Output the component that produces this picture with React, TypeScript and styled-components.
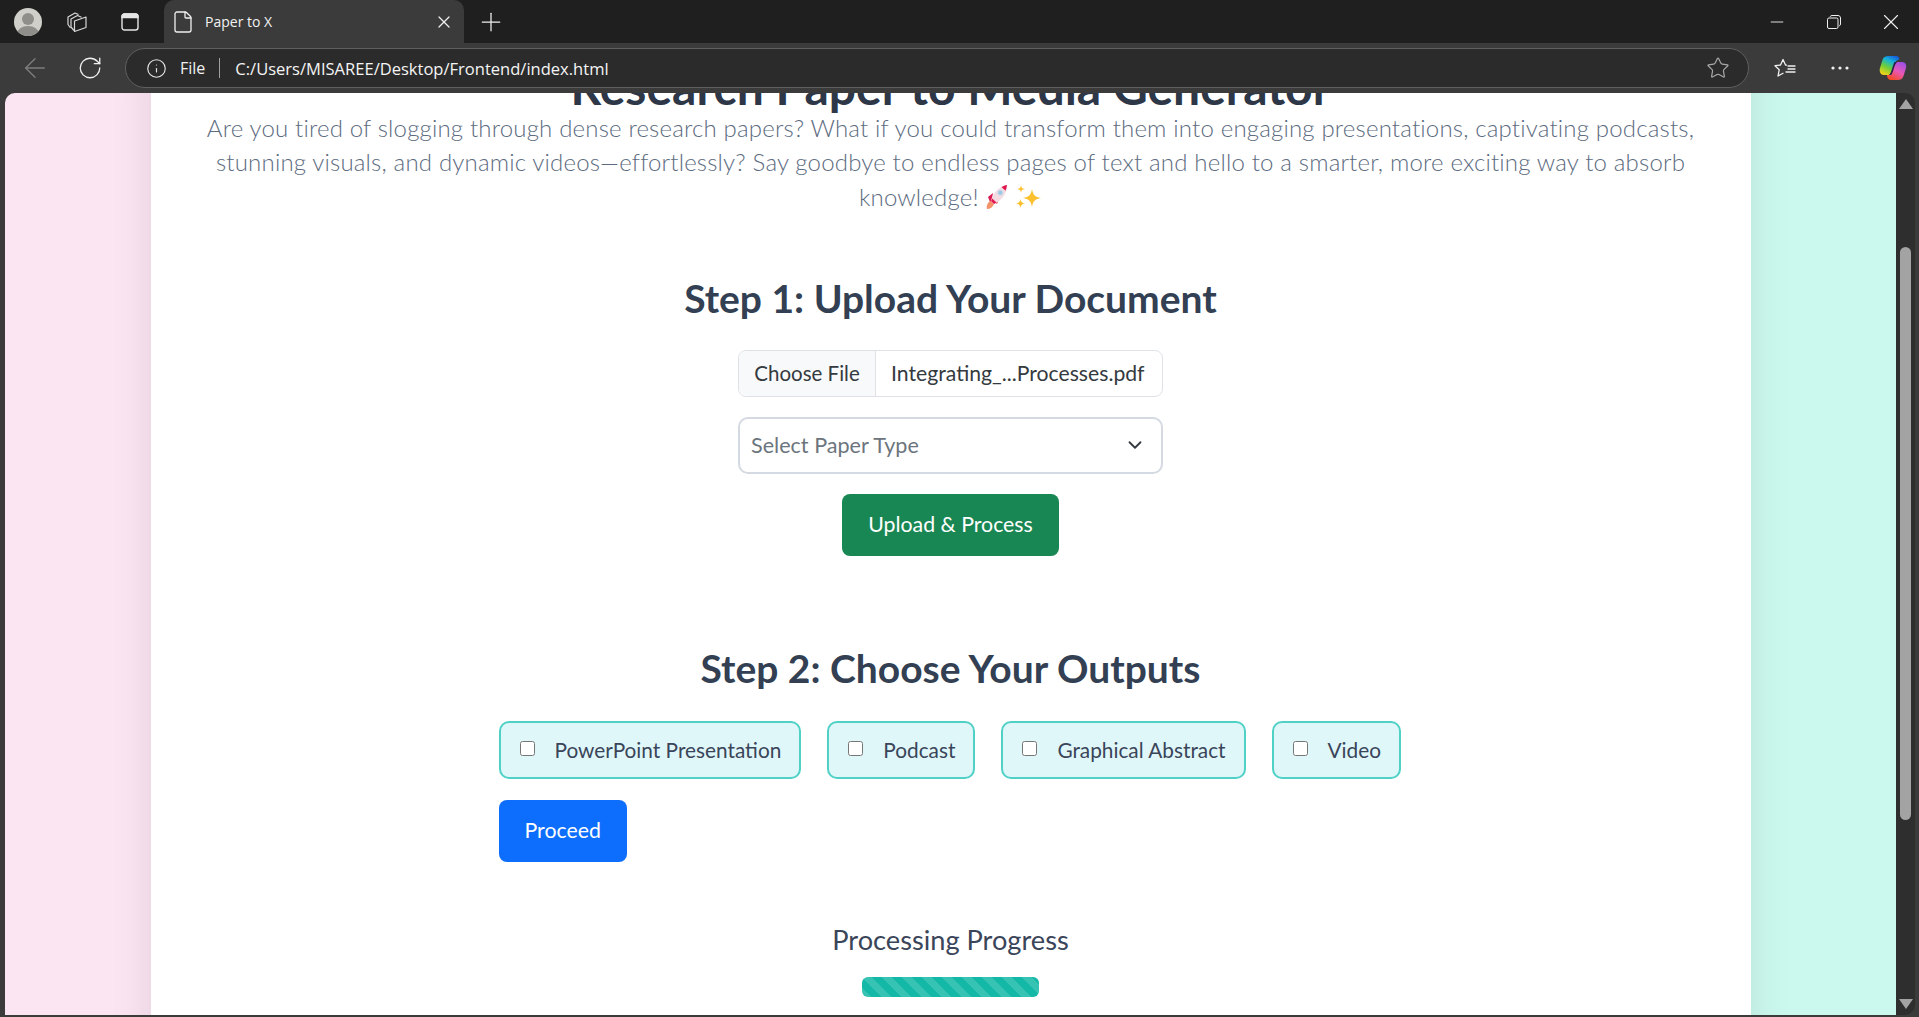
import styled, { createGlobalStyle } from 'styled-components';
import { ArrowLeft, ChevronDown, File as FileIcon, Info, Minus, Plus, RotateCw, Star, X } from 'lucide-react';

const GlobalStyle = createGlobalStyle`
  html, body {
    margin: 0;
    height: 100%;
    overflow: hidden;
    background: #3b3b3b;
  }
`;

const OUTPUTS = [
  { label: 'PowerPoint Presentation' },
  { label: 'Podcast' },
  { label: 'Graphical Abstract' },
  { label: 'Video' },
];

function Avatar() {
  return (
    <svg width='28' height='28' viewBox='0 0 28 28'>
      <defs>
        <clipPath id='avatarClip'>
          <circle cx='14' cy='14' r='14' />
        </clipPath>
      </defs>
      <circle cx='14' cy='14' r='14' fill='#d0cfca' />
      <g clipPath='url(#avatarClip)' fill='#8f8e8a'>
        <circle cx='14' cy='11' r='6' />
        <ellipse cx='14' cy='26' rx='11' ry='8' />
      </g>
    </svg>
  );
}

function WorkspacesIcon() {
  return (
    <svg width='22' height='22' viewBox='0 0 22 22' fill='none' stroke='#d8d8d8' strokeWidth='1.2' strokeLinejoin='round'>
      <path d='M4.5 17 L2 13.5 V6 L9 2 L12.5 3.5' />
      <path d='M8 19.5 L5 16 V8 L11.5 4.5 L15.5 6.2' />
      <path d='M8.5 10 L20 6 V16.5 L8.5 20.5 Z' />
    </svg>
  );
}

function VerticalTabsIcon() {
  return (
    <svg width='18' height='18' viewBox='0 0 18 18' fill='none' stroke='#e6e6e6' strokeWidth='1.4'>
      <rect x='1' y='1' width='16' height='16' rx='2.5' />
      <path d='M1 3.5 a2.5 2.5 0 0 1 2.5 -2.5 h11 a2.5 2.5 0 0 1 2.5 2.5 V4.5 H1 Z' fill='#e6e6e6' />
    </svg>
  );
}

function RestoreIcon() {
  return (
    <svg width='14' height='14' viewBox='0 0 14 14' fill='none' stroke='#f0f0f0' strokeWidth='1'>
      <rect x='0.5' y='3' width='10.5' height='10.5' rx='1.5' />
      <path d='M3 1.8 C3.4 0.9 4 0.5 5 0.5 H11 C12.4 0.5 13.5 1.6 13.5 3 V9 C13.5 10 13 10.6 12.2 11' />
    </svg>
  );
}

function FavoritesIcon() {
  return (
    <svg width='22' height='20' viewBox='0 0 22 20' fill='none' stroke='#f0f0f0' strokeWidth='1.3' strokeLinejoin='round'>
      <path d='M13 7.2 L11.5 7 L9 1.5 L6.5 7 L1 7.7 L5.2 11.8 L4 18 L9.5 15' />
      <path d='M14 8 H21 M14 11 H21 M12 14 H21' strokeLinecap='round' />
    </svg>
  );
}

function DotsIcon() {
  return (
    <svg width='18' height='4' viewBox='0 0 18 4' fill='#f0f0f0'>
      <circle cx='2' cy='2' r='1.6' />
      <circle cx='9' cy='2' r='1.6' />
      <circle cx='16' cy='2' r='1.6' />
    </svg>
  );
}

function CopilotLogo() {
  return (
    <svg width='28' height='28' viewBox='0 0 28 28'>
      <defs>
        <linearGradient id='copilotLeft' x1='0.75' y1='0' x2='0.25' y2='1'>
          <stop offset='0' stopColor='#1560e0' />
          <stop offset='0.3' stopColor='#17b5d6' />
          <stop offset='0.62' stopColor='#6ccf3a' />
          <stop offset='1' stopColor='#f7d416' />
        </linearGradient>
        <linearGradient id='copilotRight' x1='0.8' y1='0' x2='0.25' y2='1'>
          <stop offset='0' stopColor='#9a4fe6' />
          <stop offset='0.5' stopColor='#e858b8' />
          <stop offset='1' stopColor='#f4491f' />
        </linearGradient>
      </defs>
      <path d='M17 7 C15 12 14 19 10 21 H5 C1.5 21 0 17.5 1 14 L3.5 6 C4.5 3 6.5 2 9 2 H17 C19 2 20 3 20.5 5 Z' fill='url(#copilotLeft)' />
      <path d='M12 21 C14 16 14 11 18 8 H23 C26.5 8 27.8 11 27 14 L24.5 22 C23.5 25 21.5 26 19 26 H12 C10 26 8 24.5 8 21 Z' fill='url(#copilotRight)' />
      <path d='M15.5 8 C17 8 18 8 18 8 C15 11 15 17 12.5 20.5 C11.5 20.8 11 21 10 21 C13 18 13.5 11 15.5 8 Z' fill='#2b2150' />
    </svg>
  );
}

function RocketEmoji() {
  return (
    <svg width='24' height='26' viewBox='0 0 24 26'>
      <path d='M2 25 C1 21 3 18 6 17 L9 20 C8 23 5 25 2 25 Z' fill='#f4936a' />
      <path d='M3 13 L8 9 L7 15 L5 18 Z' fill='#d81b50' />
      <path d='M12 20 L14 15 L9 17 Z' fill='#d81b50' />
      <path d='M6 17 C7 10 13 3 22 1 C22 10 16 17 9 20 Z' fill='#f3dde3' />
      <path d='M16.5 3 C18 2.2 20 1.4 22 1 C21.8 3 21.3 5 20.5 6.8 Z' fill='#e2174f' />
      <path d='M6 17 L9 20 L11.5 18.6 L7.2 14.5 Z' fill='#e2174f' />
      <circle cx='15.3' cy='8.7' r='2.6' fill='#9ec9e6' stroke='#d9e3ea' strokeWidth='0.7' />
    </svg>
  );
}

function SparklesEmoji() {
  return (
    <svg width='26' height='26' viewBox='0 0 26 26' fill='#fbc02d'>
      <path d='M16 5 C17 11 19 13 25 14 C19 15 17 17 16 23 C15 17 13 15 7 14 C13 13 15 11 16 5 Z' />
      <path d='M5 1 C5.5 4 6 4.5 9 5 C6 5.5 5.5 6 5 9 C4.5 6 4 5.5 1 5 C4 4.5 4.5 4 5 1 Z' />
      <path d='M4.5 15 C5 18 5.8 18.8 9 19.5 C5.8 20.2 5 21 4.5 24 C4 21 3.2 20.2 0 19.5 C3.2 18.8 4 18 4.5 15 Z' />
    </svg>
  );
}

export default function App() {
  return (
    <Window>
      <GlobalStyle />
      <TabStrip>
        <Slot $w={44}><Avatar /></Slot>
        <Slot $w={54}><WorkspacesIcon /></Slot>
        <Slot $w={52}><VerticalTabsIcon /></Slot>
        <Tab>
          <FileIcon size={24} color='#f0f0f0' strokeWidth={1.3} />
          <TabTitle>Paper to X</TabTitle>
          <X size={20} color='#f0f0f0' strokeWidth={1.5} />
        </Tab>
        <NewTab><Plus size={30} color='#f0f0f0' strokeWidth={1} /></NewTab>
        <WindowControls>
          <Slot $w={57}><Minus size={20} color='#f0f0f0' strokeWidth={1.1} /></Slot>
          <Slot $w={57}><RestoreIcon /></Slot>
          <Slot $w={57}><X size={26} color='#f0f0f0' strokeWidth={1} /></Slot>
        </WindowControls>
      </TabStrip>

      <Toolbar>
        <Slot $w={46}><ArrowLeft size={32} color='#7d7d7d' strokeWidth={1} /></Slot>
        <Slot $w={64}><RotateCw size={26} color='#f0f0f0' strokeWidth={1.2} /></Slot>
        <AddressBar>
          <Info size={21} color='#e8e8e8' strokeWidth={1.3} />
          <AddressScheme>File</AddressScheme>
          <AddressDivider />
          <AddressUrl>C:/Users/MISAREE/Desktop/Frontend/index.html</AddressUrl>
          <Star size={24} color='#a8a8a8' strokeWidth={1.2} />
        </AddressBar>
        <Slot $w={72}><FavoritesIcon /></Slot>
        <Slot $w={38}><DotsIcon /></Slot>
        <LogoSlot><CopilotLogo /></LogoSlot>
      </Toolbar>

      <Viewport>
        <PageArea>
          <Card>
            <Title>Research Paper to Media Generator</Title>
            <Lead>
              Are you tired of slogging through dense research papers? What if you could transform them into engaging presentations, captivating podcasts,
              <br />
              stunning visuals, and dynamic videos—effortlessly? Say goodbye to endless pages of text and hello to a smarter, more exciting way to absorb
              <br />
              knowledge! <RocketEmoji /> <SparklesEmoji />
            </Lead>

            <UploadSection>
              <StepTitle>Step 1: Upload Your Document</StepTitle>
              <FileField>
                <FileButton>Choose File</FileButton>
                <FileName>Integrating_...Processes.pdf</FileName>
              </FileField>
              <SelectField>
                <span>Select Paper Type</span>
                <ChevronDown size={22} color='#343a40' strokeWidth={2} />
              </SelectField>
              <ActionButton $color='#198754'>Upload &amp; Process</ActionButton>
            </UploadSection>

            <OutputsSection>
              <StepTitle>Step 2: Choose Your Outputs</StepTitle>
              <OutputsForm>
                <OutputRow>
                  {OUTPUTS.map((output) => (
                    <OutputOption key={output.label}>
                      <OutputCheck type='checkbox' />
                      {output.label}
                    </OutputOption>
                  ))}
                </OutputRow>
                <ActionButton $color='#0d6efd'>Proceed</ActionButton>
              </OutputsForm>
            </OutputsSection>

            <ProgressSection>
              <ProgressLabel>Processing Progress</ProgressLabel>
              <ProgressBar />
            </ProgressSection>
          </Card>
        </PageArea>
        <Scrollbar>
          <ArrowUp />
          <Thumb />
          <ArrowDown />
        </Scrollbar>
      </Viewport>
    </Window>
  );
}

const Window = styled.div`
  display: flex;
  flex-direction: column;
  height: 100vh;
  background: #3b3b3b;
  font-family: 'Open Sans', 'Liberation Sans', sans-serif;
`;

const TabStrip = styled.div`
  display: flex;
  align-items: stretch;
  height: 43px;
  padding-left: 6px;
  background: #1f1f1f;
`;

const Slot = styled.div<{ $w: number }>`
  display: flex;
  align-items: center;
  justify-content: center;
  flex: none;
  width: ${({ $w }) => $w}px;
`;

const Tab = styled.div`
  display: flex;
  align-items: center;
  flex: none;
  width: 300px;
  box-sizing: border-box;
  margin-left: 8px;
  padding: 0 10px 0 7px;
  border-radius: 10px 10px 0 0;
  background: #3b3b3b;
`;

const TabTitle = styled.span`
  flex: 1;
  margin-left: 10px;
  color: #f2f2f2;
  font-size: 14px;
`;

const NewTab = styled.div`
  display: flex;
  align-items: center;
  justify-content: center;
  width: 42px;
  margin-left: 6px;
`;

const WindowControls = styled.div`
  display: flex;
  margin-left: auto;
`;

const Toolbar = styled.div`
  display: flex;
  align-items: center;
  flex: none;
  height: 50px;
  padding-left: 12px;
`;

const AddressBar = styled.div`
  display: flex;
  align-items: center;
  flex: none;
  box-sizing: border-box;
  width: 1624px;
  height: 40px;
  margin-left: 3px;
  padding: 0 18px 0 20px;
  border: 1px solid #5f5f5f;
  border-radius: 20px;
  background: #2b2b2b;
`;

const AddressScheme = styled.span`
  margin-left: 13px;
  color: #f0f0f0;
  font-size: 16px;
`;

const AddressDivider = styled.span`
  width: 1px;
  height: 20px;
  margin: 0 15px 0 14px;
  background: #a0a0a0;
`;

const AddressUrl = styled.span`
  flex: 1;
  color: #f4f4f4;
  font-size: 16.55px;
`;

const LogoSlot = styled.div`
  display: flex;
  margin-left: 20px;
`;

const Viewport = styled.div`
  display: flex;
  flex: 1;
  min-height: 0;
  margin: 0 4px 2px 5px;
`;

const PageArea = styled.main`
  flex: 1;
  min-width: 0;
  overflow: hidden;
  border-radius: 10px 0 0 0;
  background: linear-gradient(90deg, #fce5f3 0%, #fce5f3 50%, #ccf9ee 50%, #ccf9ee 100%);
  font-family: 'Lato', 'Noto Sans', sans-serif;
`;

const Card = styled.div`
  width: 1600px;
  height: 1000px;
  margin: -31px auto 0;
  background: #ffffff;
  box-shadow: 0 0 40px rgba(0, 0, 0, 0.1);
  text-align: center;
`;

const Title = styled.h1`
  margin: 0;
  color: #2d3748;
  font-size: 48px;
  font-weight: 700;
  line-height: 50px;
`;

const Lead = styled.p`
  margin: -1px 0 0;
  color: #5c6b80;
  font-size: 24px;
  font-weight: 300;
  letter-spacing: 0.18px;
  line-height: 34.4px;

  svg {
    vertical-align: -4px;
  }
`;

const UploadSection = styled.section`
  display: flex;
  flex-direction: column;
  align-items: center;
  margin-top: 60px;
`;

const StepTitle = styled.h2`
  margin: 0 0 28px;
  color: #333f52;
  font-size: 39px;
  font-weight: 700;
  line-height: 48px;
`;

const FileField = styled.div`
  display: flex;
  box-sizing: border-box;
  width: 425px;
  height: 47px;
  margin-bottom: 20px;
  border: 1px solid #dee2e6;
  border-radius: 8px;
  overflow: hidden;
  color: #343a40;
  font-size: 20.5px;
  line-height: 44px;
`;

const FileButton = styled.span`
  flex: none;
  box-sizing: border-box;
  width: 137px;
  border-right: 1px solid #dee2e6;
  background: #f8f9fa;
`;

const FileName = styled.span`
  flex: 1;
  padding-left: 15px;
  font-size: 21.2px;
  text-align: left;
  white-space: nowrap;
`;

const SelectField = styled.div`
  display: flex;
  align-items: center;
  justify-content: space-between;
  box-sizing: border-box;
  width: 425px;
  height: 57px;
  margin-bottom: 20px;
  padding: 0 15px 2px 11px;
  border: 2px solid #d5d9e2;
  border-radius: 10px;
  color: #6c757d;
  font-size: 21.6px;
`;

const ActionButton = styled.button<{ $color: string }>`
  height: 62px;
  padding: 0 26px 2px;
  border: none;
  border-radius: 8px;
  background: ${({ $color }) => $color};
  color: #ffffff;
  font-family: inherit;
  font-size: 21.3px;
`;

const OutputsSection = styled.section`
  display: flex;
  flex-direction: column;
  align-items: center;
  margin-top: 88px;
`;

const OutputsForm = styled.div`
  width: 904px;
  margin-top: 1px;
  text-align: left;
`;

const OutputRow = styled.div`
  display: flex;
  gap: 26px;
  margin-bottom: 21px;
`;

const OutputOption = styled.label`
  display: flex;
  align-items: center;
  flex: none;
  box-sizing: border-box;
  height: 58px;
  padding: 0 18px 2px 19px;
  border: 2px solid #4fd1c5;
  border-radius: 10px;
  background: #e0f7fa;
  color: #3a4559;
  font-size: 20.8px;
  white-space: nowrap;
`;

const OutputCheck = styled.input`
  width: 15px;
  height: 15px;
  margin: -1px 20px 0 0;
`;

const ProgressSection = styled.section`
  display: flex;
  flex-direction: column;
  align-items: center;
  margin-top: 63px;
`;

const ProgressLabel = styled.div`
  margin-bottom: 22px;
  color: #3a4559;
  font-size: 27.2px;
  line-height: 30px;
`;

const ProgressBar = styled.div`
  width: 177px;
  height: 20px;
  border-radius: 6px;
  background-color: #14b8a6;
  background-image: linear-gradient(
    45deg,
    rgba(255, 255, 255, 0.15) 25%,
    transparent 25%,
    transparent 50%,
    rgba(255, 255, 255, 0.15) 50%,
    rgba(255, 255, 255, 0.15) 75%,
    transparent 75%
  );
  background-size: 20px 20px;
`;

const Scrollbar = styled.div`
  display: flex;
  flex-direction: column;
  align-items: center;
  flex: none;
  width: 19px;
  border-radius: 0 10px 10px 0;
  background: #2e2e2e;
`;

const ArrowUp = styled.div`
  flex: none;
  width: 0;
  height: 0;
  margin-top: 6px;
  border-left: 7px solid transparent;
  border-right: 7px solid transparent;
  border-bottom: 10px solid #a3a3a3;
`;

const Thumb = styled.div`
  flex: none;
  width: 11px;
  height: 573px;
  margin-top: 138px;
  border-radius: 6px;
  background: #a3a3a3;
`;

const ArrowDown = styled.div`
  flex: none;
  width: 0;
  height: 0;
  margin: auto 0 6px;
  border-left: 7px solid transparent;
  border-right: 7px solid transparent;
  border-top: 10px solid #a3a3a3;
`;
